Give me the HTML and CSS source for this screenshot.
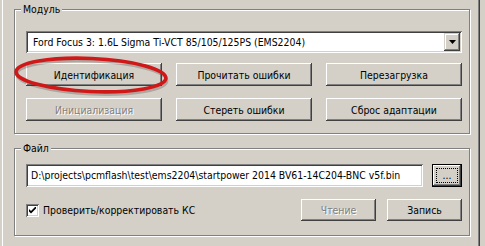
FILE: index.html
```html
<!DOCTYPE html>
<html lang="ru">
<head>
    <meta charset="UTF-8">
    <title>PCMFlash</title>
    <link rel="stylesheet" href="styles.css">
</head>
<body>
    <div class="panel">
        <!-- Модуль -->
        <div class="group group-module">
            <span class="legend">Модуль</span>
            <div class="combo">
                <span class="combo-text">Ford Focus 3: 1.6L Sigma Ti-VCT 85/105/125PS (EMS2204)</span>
                <span class="combo-btn">
                    <svg width="7" height="4" viewBox="0 0 7 4"><path d="M0 0h7L3.5 4z" fill="#000"/></svg>
                </span>
            </div>
            <div class="btn-grid">
                <button class="btn">Идентификация</button>
                <button class="btn">Прочитать ошибки</button>
                <button class="btn">Перезагрузка</button>
                <button class="btn" disabled>Инициализация</button>
                <button class="btn">Стереть ошибки</button>
                <button class="btn">Сброс адаптации</button>
            </div>
        </div>

        <!-- Файл -->
        <div class="group group-file">
            <span class="legend">Файл</span>
            <div class="file-row">
                <div class="field">D:\projects\pcmflash\test\ems2204\startpower 2014 BV61-14C204-BNC v5f.bin</div>
                <button class="btn btn-browse"><span class="focus">...</span></button>
            </div>
            <div class="action-row">
                <label class="check">
                    <span class="check-box">
                        <svg width="7" height="7" viewBox="0 0 7 7"><path d="M0 2l2 2 5-5v2.6l-5 5-2-2z" fill="#000"/></svg>
                    </span>
                    Проверить/корректировать КС
                </label>
                <div class="actions">
                    <button class="btn btn-small" disabled>Чтение</button>
                    <button class="btn btn-small">Запись</button>
                </div>
            </div>
        </div>
    </div>

    <!-- red marker round the first button -->
    <svg class="marker" width="485" height="246" viewBox="0 0 485 246">
        <ellipse cx="91" cy="76" rx="75" ry="16.5" fill="none" stroke="rgba(60,40,40,0.25)" stroke-width="3" transform="rotate(2.5 91 76) translate(1 1.5)"/>
        <ellipse cx="91" cy="75" rx="75" ry="16.5" fill="none" stroke="#d01818" stroke-width="3.6" transform="rotate(2.5 91 75)"/>
    </svg>
</body>
</html>
```

FILE: styles.css
```css
/* classic windows look */
body {
    margin: 0;
    width: 485px;
    height: 246px;
    overflow: hidden;
    position: relative;
    background: #d4d0c8;
    font-family: "DejaVu Sans", sans-serif;
    font-stretch: condensed;
    font-size: 10.4px;
    color: #000;
}

.panel {
    margin-left: 2px;
    width: 477px;
    height: 246px;
    border-left: 1px solid #fff;
    border-right: 1px solid #808080;
    box-shadow: 1px 0 0 #404040;
    padding: 9px 0 0 11px;
    box-sizing: border-box;
}

.group {
    position: relative;
    width: 456px;
    box-sizing: border-box;
    border: 1px solid #808080;
    box-shadow: inset 1px 1px 0 #fff, 1px 1px 0 #fff;
    padding: 21px 7px 0 11px;
}

.group-module {
    height: 125px;
}

.group-file {
    height: 88px;
    margin-top: 14px;
    padding-top: 15px;
}

.legend {
    position: absolute;
    top: -7px;
    left: 6px;
    padding: 0 2px;
    line-height: 13px;
    background: #d4d0c8;
}

/* combo box */
.combo {
    display: flex;
    align-items: center;
    height: 22px;
    background: #fff;
    box-shadow: inset 1px 1px 0 #808080, inset -1px -1px 0 #fff, inset 2px 2px 0 #404040, inset -2px -2px 0 #d4d0c8;
    padding: 2px;
    box-sizing: border-box;
}

.combo-text {
    flex: 1;
    padding-left: 5px;
    white-space: nowrap;
}

.combo-btn {
    width: 16px;
    height: 18px;
    display: flex;
    align-items: center;
    justify-content: center;
    background: #d4d0c8;
    box-shadow: inset -1px -1px 0 #404040, inset 1px 1px 0 #d4d0c8, inset -2px -2px 0 #808080, inset 2px 2px 0 #fff;
}

/* buttons */
.btn-grid {
    display: grid;
    grid-template-columns: repeat(3, 136px);
    column-gap: 14px;
    row-gap: 12px;
    margin-top: 10px;
}

.btn {
    height: 23px;
    padding: 0;
    border: none;
    background: #d4d0c8;
    font: inherit;
    color: #000;
    box-shadow: inset -1px -1px 0 #404040, inset 1px 1px 0 #fff, inset -2px -2px 0 #808080, inset 2px 2px 0 #d4d0c8;
}

.btn:disabled {
    color: #808080;
    text-shadow: 1px 1px 0 #fff;
}

/* file row */
.file-row {
    display: flex;
    gap: 9px;
}

.field {
    width: 397px;
    height: 23px;
    line-height: 23px;
    padding-left: 5px;
    box-sizing: border-box;
    background: #fff;
    white-space: nowrap;
    overflow: hidden;
    box-shadow: inset 1px 1px 0 #808080, inset -1px -1px 0 #fff, inset 2px 2px 0 #404040, inset -2px -2px 0 #d4d0c8;
}

.btn-browse {
    width: 30px;
    border: 1px solid #000;
    display: flex;
    align-items: center;
    justify-content: center;
    padding: 3px;
}

.focus {
    flex: 1;
    align-self: stretch;
    border: 1px dotted #000;
    line-height: 13px;
    text-align: center;
}

.action-row {
    display: flex;
    align-items: center;
    margin-top: 12px;
}

.check {
    display: flex;
    align-items: center;
    gap: 4px;
}

.check-box {
    width: 13px;
    height: 13px;
    box-sizing: border-box;
    display: flex;
    align-items: center;
    justify-content: center;
    background: #fff;
    box-shadow: inset 1px 1px 0 #808080, inset -1px -1px 0 #fff, inset 2px 2px 0 #404040, inset -2px -2px 0 #d4d0c8;
}

.actions {
    margin-left: auto;
    display: flex;
    gap: 11px;
}

.btn-small {
    width: 75px;
    height: 22px;
}

.marker {
    position: absolute;
    left: 0;
    top: 0;
    pointer-events: none;
}
```
